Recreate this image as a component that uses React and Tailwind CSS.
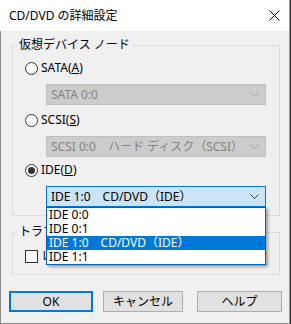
import React from "react";

const FONT = { fontFamily: '"Noto Sans", "Noto Sans CJK JP", sans-serif' };

// small chevron used by the combo boxes
const Chevron = ({ color }) => (
  <svg width="9" height="5" viewBox="0 0 9 5" className="shrink-0">
    <path d="M0.5 0.5 L4.5 4.5 L8.5 0.5" fill="none" stroke={color} strokeWidth="1" />
  </svg>
);

const Radio = ({ checked, children }) => (
  <div className="flex items-center h-[16px] pl-[12px] gap-[3px]">
    <span className="w-[13px] h-[13px] rounded-full border border-[#333333] bg-white flex items-center justify-center shrink-0">
      {checked && <span className="w-[7px] h-[7px] rounded-full bg-[#333333]" />}
    </span>
    <span className="text-[12px] leading-[16px] text-black">{children}</span>
  </div>
);

const Combo = ({ text, active, className = "" }) => (
  <div
    className={
      "ml-[33px] w-[220px] h-[21px] flex items-center justify-between pl-[4px] pr-[6px] border " +
      (active
        ? "bg-[#cce4f7] border-[#0078d7] text-black"
        : "bg-[#cccccc] border-[#bfbfbf] text-[#838383]") +
      " " +
      className
    }
  >
    <span className="text-[12px] leading-[16px] whitespace-pre">{text}</span>
    <Chevron color={active ? "#333333" : "#a6a6a6"} />
  </div>
);

const GroupLabel = ({ children }) => (
  <div className="-mt-[9px] ml-[4px] px-[2px] w-fit h-[16px] bg-[#f0f0f0] text-[12px] leading-[16px] text-black whitespace-nowrap">
    {children}
  </div>
);

const items = ["IDE 0:0", "IDE 0:1", "IDE 1:0　CD/DVD（IDE）", "IDE 1:1"];

export default function App() {
  return (
    <div className="w-[291px] h-[324px] flex overflow-hidden" style={FONT}>
      <div className="w-[289px] flex flex-col">
        {/* Title bar */}
        <div className="h-[31px] bg-white flex items-center justify-between pl-[9px] pr-[9px]">
          <span className="text-[12px] leading-[16px] text-black">CD/DVD の詳細設定</span>
          <svg width="11" height="11" viewBox="0 0 11 11" className="mr-[0px]">
            <path d="M0.5 0.5 L10.5 10.5 M10.5 0.5 L0.5 10.5" stroke="#000" strokeWidth="1" />
          </svg>
        </div>

        {/* Body */}
        <div className="h-[293px] bg-[#f0f0f0] border-l border-b border-[#8f8f8f] flex flex-col">
          {/* Virtual device node */}
          <div className="relative mt-[14px] ml-[11px] w-[268px] border border-[#dcdcdc] pb-[8px] flex flex-col">
            <GroupLabel>仮想デバイス ノード</GroupLabel>
            <div className="mt-[7px]">
              <Radio>
                SATA(<u>A</u>)
              </Radio>
            </div>
            <Combo text="SATA 0:0" className="mt-[8px]" />
            <div className="mt-[7px]">
              <Radio>
                SCSI(<u>S</u>)
              </Radio>
            </div>
            <Combo text="SCSI 0:0　ハード ディスク（SCSI）" className="mt-[8px]" />
            <div className="mt-[5px]">
              <Radio checked>
                IDE(<u>D</u>)
              </Radio>
            </div>
            <div className="relative mt-[8px]">
              <Combo text="IDE 1:0　CD/DVD（IDE）" active />
              {/* open list */}
              <div className="absolute z-10 left-[33px] top-[21px] w-[220px] bg-white border border-[#0063b1] shadow-[2px_2px_3px_rgba(0,0,0,0.35)] flex flex-col">
                {items.map((it, i) => (
                  <div
                    key={it}
                    className={
                      "h-[14px] pl-[2px] text-[12px] leading-[14px] whitespace-pre " +
                      (i === 2 ? "bg-[#0078d7] text-white" : "text-black")
                    }
                  >
                    {it}
                  </div>
                ))}
              </div>
            </div>
          </div>

          {/* Troubleshooting */}
          <div className="mt-[16px] ml-[11px] w-[268px] border border-[#dcdcdc] pb-[10px] flex flex-col">
            <GroupLabel>トラブルシューティング</GroupLabel>
            <div className="mt-[8px] flex items-center h-[16px] pl-[12px] gap-[3px]">
              <span className="w-[13px] h-[13px] border border-[#333333] bg-white shrink-0" />
              <span className="text-[12px] leading-[16px] text-black">レガシー エミュレーションを使用(E)</span>
            </div>
          </div>

          {/* Buttons */}
          <div className="mt-[16px] ml-[8px] flex">
            <button className="w-[84px] h-[21px] bg-[#e1e1e1] border-2 border-[#0078d7] text-[12px] leading-[16px] text-black">
              OK
            </button>
            <button className="ml-[10px] w-[80px] h-[21px] bg-[#e1e1e1] border border-[#adadad] text-[12px] leading-[16px] text-black">
              キャンセル
            </button>
            <button className="ml-[14px] w-[85px] h-[21px] bg-[#e1e1e1] border border-[#adadad] text-[12px] leading-[16px] text-black">
              ヘルプ
            </button>
          </div>
        </div>
      </div>
      <div className="w-[1px] bg-[#9a9a9a]" />
      <div className="w-[1px] bg-[#2b2b2b]" />
    </div>
  );
}
